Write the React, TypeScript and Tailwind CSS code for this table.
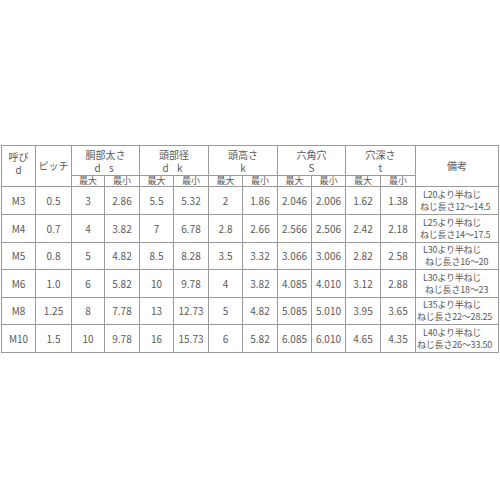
import React from "react";

const rows = [
  { d: "M3", p: "0.5", v: ["3", "2.86", "5.5", "5.32", "2", "1.86", "2.046", "2.006", "1.62", "1.38"], n1: "L20より半ねじ", n2: "ねじ長さ12～14.5", i: "pl-[3px]", h: "h-[28px]" },
  { d: "M4", p: "0.7", v: ["4", "3.82", "7", "6.78", "2.8", "2.66", "2.566", "2.506", "2.42", "2.18"], n1: "L25より半ねじ", n2: "ねじ長さ14～17.5", i: "pl-[3px]", h: "h-[28px]" },
  { d: "M5", p: "0.8", v: ["5", "4.82", "8.5", "8.28", "3.5", "3.32", "3.066", "3.006", "2.82", "2.58"], n1: "L30より半ねじ", n2: "ねじ長さ16～20", i: "pl-[8px]", h: "h-[27px]" },
  { d: "M6", p: "1.0", v: ["6", "5.82", "10", "9.78", "4", "3.82", "4.085", "4.010", "3.12", "2.88"], n1: "L30より半ねじ", n2: "ねじ長さ18～23", i: "pl-[8px]", h: "h-[28px]" },
  { d: "M8", p: "1.25", v: ["8", "7.78", "13", "12.73", "5", "4.82", "5.085", "5.010", "3.95", "3.65"], n1: "L35より半ねじ", n2: "ねじ長さ22～28.25", i: "pl-0", h: "h-[27px]" },
  { d: "M10", p: "1.5", v: ["10", "9.78", "16", "15.73", "6", "5.82", "6.085", "6.010", "4.65", "4.35"], n1: "L40より半ねじ", n2: "ねじ長さ26～33.50", i: "pl-0", h: "h-[28px]" },
];

const cell = "border border-[#9a9a9a] text-center align-middle p-0";

export default function App() {
  return (
    <div
      className="w-[500px] h-[500px] bg-white text-[#5a5a5a]"
      style={{ fontFamily: '"Noto Sans CJK JP", "Noto Sans", sans-serif' }}
    >
      <div className="pt-[145px] pl-[1px]">
        <table className="table-fixed border-collapse border border-[#333] w-[497px] text-[10px] leading-[12px]">
          <colgroup>
            <col className="w-[34px]" />
            <col className="w-[36px]" />
            <col className="w-[33px]" />
            <col className="w-[35px]" />
            <col className="w-[34px]" />
            <col className="w-[35px]" />
            <col className="w-[34px]" />
            <col className="w-[35px]" />
            <col className="w-[34px]" />
            <col className="w-[34px]" />
            <col className="w-[35px]" />
            <col className="w-[35px]" />
            <col className="w-[83px]" />
          </colgroup>
          <thead>
            <tr className="h-[30px]">
              <th rowSpan={2} className={`${cell} font-normal`}>
                <div className="leading-[13px] -mt-[6px]">呼び</div>
                <div className="leading-[13px]">d</div>
              </th>
              <th rowSpan={2} className={`${cell} font-normal`}>ピッチ</th>
              <th colSpan={2} className={`${cell} font-normal leading-[13px]`}>
                <div>胴部太さ</div>
                <div className="tracking-[3px]">d s</div>
              </th>
              <th colSpan={2} className={`${cell} font-normal leading-[13px]`}>
                <div>頭部径</div>
                <div className="tracking-[3px]">d k</div>
              </th>
              <th colSpan={2} className={`${cell} font-normal leading-[13px]`}>
                <div>頭高さ</div>
                <div>k</div>
              </th>
              <th colSpan={2} className={`${cell} font-normal leading-[13px]`}>
                <div>六角穴</div>
                <div>S</div>
              </th>
              <th colSpan={2} className={`${cell} font-normal leading-[13px]`}>
                <div>穴深さ</div>
                <div>t</div>
              </th>
              <th rowSpan={2} className={`${cell} font-normal`}>備考</th>
            </tr>
            <tr className="h-[11px]">
              {["最大", "最小", "最大", "最小", "最大", "最小", "最大", "最小", "最大", "最小"].map((t, i) => (
                <th key={i} className={`${cell} font-normal text-[9px] leading-[10px]`}>{t}</th>
              ))}
            </tr>
          </thead>
          <tbody>
            {rows.map((r) => (
              <tr key={r.d} className={r.h}>
                <td className={cell}>{r.d}</td>
                <td className={cell}>{r.p}</td>
                {r.v.map((x, i) => (
                  <td key={i} className={cell}>{x}</td>
                ))}
                <td className="border border-[#9a9a9a] text-left align-middle p-0 pl-[1px] whitespace-nowrap text-[9px] leading-[12px] tracking-[-0.2px]">
                  <div className="pl-[6px]">{r.n1}</div>
                  <div className={r.i}>{r.n2}</div>
                </td>
              </tr>
            ))}
          </tbody>
        </table>
      </div>
    </div>
  );
}
